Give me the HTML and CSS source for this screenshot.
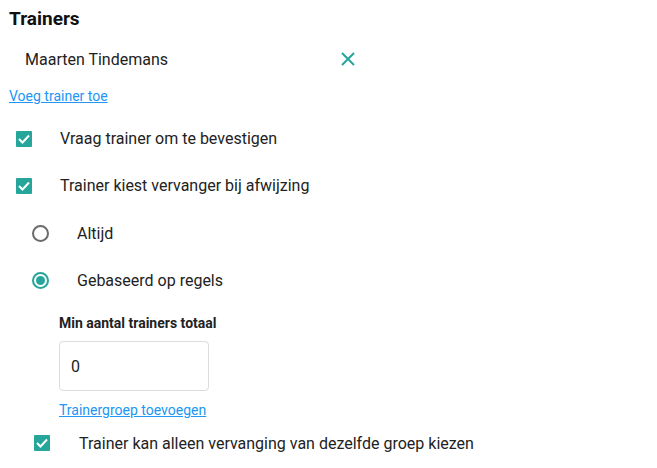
FILE: index.html
```html
<!DOCTYPE html>
<html>
<head>
<meta charset="utf-8">
<link rel="stylesheet" href="styles.css">
</head>
<body>
<div class="panel">
  <h2 class="title">Trainers</h2>
  <div class="trainer-row">
    <span class="trainer-name">Maarten Tindemans</span>
    <svg class="remove" width="14" height="14" viewBox="0 0 14 14"><path d="M1 1L13 13M13 1L1 13" stroke="#26a69a" stroke-width="2" fill="none"/></svg>
  </div>
  <a class="link" href="#">Voeg trainer toe</a>

  <div class="opt opt-check">
    <span class="cb"><svg width="12" height="10" viewBox="0 0 12 10"><path d="M1 5L4.5 8.5L11 1.5" stroke="#fff" stroke-width="2" fill="none"/></svg></span>
    <span class="opt-label">Vraag trainer om te bevestigen</span>
  </div>
  <div class="opt opt-check">
    <span class="cb"><svg width="12" height="10" viewBox="0 0 12 10"><path d="M1 5L4.5 8.5L11 1.5" stroke="#fff" stroke-width="2" fill="none"/></svg></span>
    <span class="opt-label">Trainer kiest vervanger bij afwijzing</span>
  </div>

  <div class="sub">
    <div class="opt opt-radio">
      <span class="radio"></span>
      <span class="opt-label">Altijd</span>
    </div>
    <div class="opt opt-radio">
      <span class="radio on"></span>
      <span class="opt-label">Gebaseerd op regels</span>
    </div>

    <div class="rules">
      <div class="field-label">Min aantal trainers totaal</div>
      <div class="input">0</div>
      <a class="link link-group" href="#">Trainergroep toevoegen</a>
    </div>

    <div class="opt opt-check opt-last">
      <span class="cb"><svg width="12" height="10" viewBox="0 0 12 10"><path d="M1 5L4.5 8.5L11 1.5" stroke="#fff" stroke-width="2" fill="none"/></svg></span>
      <span class="opt-label">Trainer kan alleen vervanging van dezelfde groep kiezen</span>
    </div>
  </div>
</div>
</body>
</html>
```

FILE: styles.css
```css
* { box-sizing: border-box; }
body {
  margin: 0;
  background: #fff;
  font-family: Roboto, "Noto Sans", Arial, sans-serif;
  color: #212121;
}
.panel {
  padding: 7px 9px 0 9px;
}
.title {
  margin: 0;
  font-size: 19px;
  font-weight: 700;
  color: #111;
  line-height: 24px;
}
.trainer-row {
  display: flex;
  align-items: center;
  width: 346px;
  height: 40px;
  padding-left: 16px;
  margin-top: 8px;
}
.trainer-name {
  flex: 1;
  font-size: 16px;
  color: #222;
}
.remove { display: block; }
.link {
  display: inline-block;
  font-size: 14px;
  line-height: 20px;
  color: #2196f3;
  text-decoration: underline;
}
.trainer-row + .link { margin-top: 7px; }
.opt {
  display: flex;
  align-items: center;
  height: 47px;
  font-size: 16px;
  color: #222;
}
.opt-check { padding-left: 7px; }
.opt-check .opt-label { margin-left: 28px; }
.link + .opt { margin-top: 9px; }
.cb {
  width: 16px;
  height: 16px;
  background: #26a69a;
  border-radius: 1px;
  display: flex;
  align-items: center;
  justify-content: center;
}
.sub { padding-left: 16px; }
.opt-radio { height: 47px; padding-left: 7px; }
.sub .opt-radio:first-child { margin-top: 1px; }
.radio {
  width: 17px;
  height: 17px;
  border: 2px solid #6b6b6b;
  border-radius: 50%;
  display: flex;
  align-items: center;
  justify-content: center;
}
.radio.on { border-color: #26a69a; }
.radio.on::after {
  content: "";
  width: 9px;
  height: 9px;
  border-radius: 50%;
  background: #26a69a;
}
.opt-radio .opt-label { margin-left: 28px; }
.rules {
  padding-left: 34px;
  margin-top: 9px;
}
.field-label {
  font-size: 14px;
  font-weight: 700;
  color: #222;
  line-height: 20px;
}
.input {
  margin-top: 8px;
  width: 150px;
  height: 50px;
  border: 1px solid #dcdcdc;
  border-radius: 4px;
  padding-left: 11px;
  display: flex;
  align-items: center;
  font-size: 16px;
  color: #222;
}
.link-group { margin-top: 9px; }
.opt-last { height: 24px; margin-top: 11px; padding-left: 9px; }
.opt-last .opt-label { margin-left: 29px; }
```
